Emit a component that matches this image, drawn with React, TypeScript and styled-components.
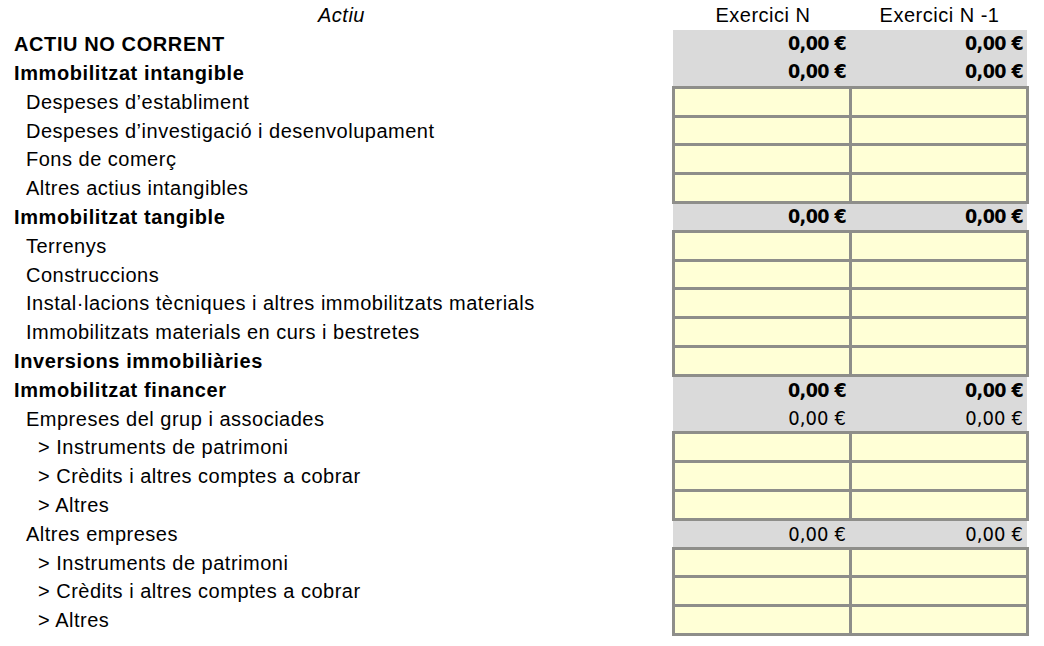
import styled, { createGlobalStyle } from 'styled-components'

const GlobalStyle = createGlobalStyle`
  html, body {
    margin: 0;
    padding: 0;
    background: #ffffff;
  }
  body {
    font-family: "Liberation Sans", Arial, sans-serif;
    color: #000000;
  }
`

const Sheet = styled.table`
  border-collapse: collapse;
  table-layout: fixed;
  width: 1027px;
  margin-top: 1px;
`

const HeadRow = styled.tr`
  height: 28.8px;
`

const HeadCell = styled.th<{ $italic?: boolean; $shift?: number }>`
  padding: 0 0 0 ${({ $shift }) => $shift ?? 0}px;
  font-family: "Liberation Sans", Arial, sans-serif;
  font-size: 20px;
  line-height: 22px;
  font-weight: normal;
  font-style: ${({ $italic }) => ($italic ? 'italic' : 'normal')};
  letter-spacing: 0.5px;
  text-align: center;
  vertical-align: middle;
`

const Row = styled.tr`
  height: 28.8px;
`

const Label = styled.td<{ $level: number; $bold: boolean }>`
  padding: 0 0 0 ${({ $level }) => 14 + $level * 12}px;
  font-size: 20px;
  line-height: 22px;
  letter-spacing: ${({ $bold }) => ($bold ? '0.6px' : '0.5px')};
  font-weight: ${({ $bold }) => ($bold ? 'bold' : 'normal')};
  white-space: nowrap;
  vertical-align: middle;
`

const Total = styled.td<{ $bold: boolean }>`
  padding: 0 4px 0 0;
  background: #dadada;
  text-align: right;
  vertical-align: middle;
  font-family: "DejaVu Sans Condensed", "DejaVu Sans", sans-serif;
  font-size: ${({ $bold }) => ($bold ? '19.5px' : '20px')};
  line-height: 22px;
  font-weight: ${({ $bold }) => ($bold ? 'bold' : 'normal')};
  letter-spacing: ${({ $bold }) => ($bold ? '-0.6px' : '0.1px')};
  white-space: nowrap;
`

const Input = styled.td`
  padding: 0;
  background: #ffffd6;
  border: 3px solid #8e8e8a;
`

type Kind = 'bold' | 'plain' | 'input'

type Line = {
  label: string
  level: number
  bold?: boolean
  kind: Kind
}

const lines: Line[] = [
  { label: 'ACTIU NO CORRENT', level: 0, bold: true, kind: 'bold' },
  { label: 'Immobilitzat intangible', level: 0, bold: true, kind: 'bold' },
  { label: 'Despeses d’establiment', level: 1, kind: 'input' },
  { label: 'Despeses d’investigació i desenvolupament', level: 1, kind: 'input' },
  { label: 'Fons de comerç', level: 1, kind: 'input' },
  { label: 'Altres actius intangibles', level: 1, kind: 'input' },
  { label: 'Immobilitzat tangible', level: 0, bold: true, kind: 'bold' },
  { label: 'Terrenys', level: 1, kind: 'input' },
  { label: 'Construccions', level: 1, kind: 'input' },
  { label: 'Instal·lacions tècniques i altres immobilitzats materials', level: 1, kind: 'input' },
  { label: 'Immobilitzats materials en curs i bestretes', level: 1, kind: 'input' },
  { label: 'Inversions immobiliàries', level: 0, bold: true, kind: 'input' },
  { label: 'Immobilitzat financer', level: 0, bold: true, kind: 'bold' },
  { label: 'Empreses del grup i associades', level: 1, kind: 'plain' },
  { label: '> Instruments de patrimoni', level: 2, kind: 'input' },
  { label: '> Crèdits i altres comptes a cobrar', level: 2, kind: 'input' },
  { label: '> Altres', level: 2, kind: 'input' },
  { label: 'Altres empreses', level: 1, kind: 'plain' },
  { label: '> Instruments de patrimoni', level: 2, kind: 'input' },
  { label: '> Crèdits i altres comptes a cobrar', level: 2, kind: 'input' },
  { label: '> Altres', level: 2, kind: 'input' },
]

function Values({ kind }: { kind: Kind }) {
  if (kind === 'input') {
    return (
      <>
        <Input />
        <Input />
      </>
    )
  }
  const bold = kind === 'bold'
  return (
    <>
      <Total $bold={bold}>0,00 €</Total>
      <Total $bold={bold}>0,00 €</Total>
    </>
  )
}

export default function App() {
  return (
    <>
      <GlobalStyle />
      <Sheet>
        <colgroup>
          <col style={{ width: 673 }} />
          <col style={{ width: 177 }} />
          <col style={{ width: 177 }} />
        </colgroup>
        <thead>
          <HeadRow>
            <HeadCell $italic $shift={10}>Actiu</HeadCell>
            <HeadCell $shift={3}>Exercici N</HeadCell>
            <HeadCell $shift={2}>Exercici N -1</HeadCell>
          </HeadRow>
        </thead>
        <tbody>
          {lines.map((line, i) => (
            <Row key={i}>
              <Label $level={line.level} $bold={!!line.bold}>
                {line.label}
              </Label>
              <Values kind={line.kind} />
            </Row>
          ))}
        </tbody>
      </Sheet>
    </>
  )
}
